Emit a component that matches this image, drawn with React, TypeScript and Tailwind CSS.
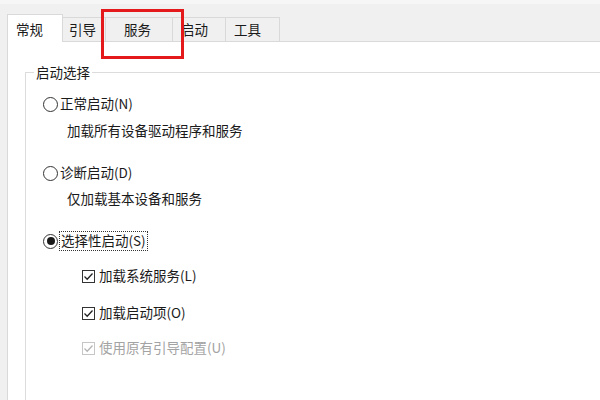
import React from "react";

const font = { fontFamily: '"Noto Sans CJK SC", "Microsoft YaHei", sans-serif' };

function Radio({ checked }: { checked?: boolean }) {
  return (
    <span className="flex h-[15px] w-[15px] shrink-0 items-center justify-center rounded-full border border-[#333] bg-white">
      {checked && <span className="h-[8px] w-[8px] rounded-full bg-[#1a1a1a]" />}
    </span>
  );
}

function Check({ disabled }: { disabled?: boolean }) {
  return (
    <span
      className={
        "flex h-[13px] w-[13px] shrink-0 items-center justify-center border bg-white " +
        (disabled ? "border-[#c6c6c6]" : "border-[#333]")
      }
    >
      <svg width="11" height="11" viewBox="0 0 11 11">
        <polyline
          points="1.5,5.5 4.2,8.2 9.5,2.5"
          fill="none"
          stroke={disabled ? "#b4b4b4" : "#222"}
          strokeWidth="1.3"
        />
      </svg>
    </span>
  );
}

export default function App() {
  return (
    <div className="relative h-[400px] w-[600px] overflow-hidden bg-[#f0f0f0] text-[13.5px] leading-none text-[#1a1a1a]" style={font}>
      <div className="h-[4px] bg-[#f6f6f6]" />
      {/* tab strip */}
      <div className="flex h-[37px] items-end pl-[7px]">
        <div className="relative z-10 -mb-[1px] flex h-[28px] w-[56px] items-center border border-b-0 border-[#d9d9d9] bg-white pl-[8px] pt-[2px]">
          常规
        </div>
        <div className="flex h-[24px] w-[43px] items-center border-t border-r border-[#d9d9d9] pl-[6px]">引导</div>
        <div className="flex h-[24px] w-[67px] items-center border-t border-r border-[#d9d9d9] pl-[18px]">服务</div>
        <div className="flex h-[24px] w-[53px] items-center border-t border-r border-[#d9d9d9] pl-[8px]">启动</div>
        <div className="flex h-[24px] w-[54px] items-center border-t border-r border-[#d9d9d9] pl-[8px]">工具</div>
      </div>
      {/* page */}
      <div className="ml-[7px] h-[400px] border-t border-l border-[#d9d9d9] bg-white pl-[17px] pt-[30px]">
        <div className="relative h-[400px] border-t border-l border-[#dcdcdc]">
          <div className="absolute -top-[10px] left-[8px] bg-white px-[2px] leading-[18px]">启动选择</div>
          <div className="pl-[17px] pt-[21px]">
            <div className="flex h-[20px] items-center gap-[2px]">
              <Radio />
              <span>正常启动(N)</span>
            </div>
            <div className="mt-[7px] flex h-[20px] items-center pl-[24px]">加载所有设备驱动程序和服务</div>
            <div className="mt-[22px] flex h-[20px] items-center gap-[2px]">
              <Radio />
              <span>诊断启动(D)</span>
            </div>
            <div className="mt-[6px] flex h-[20px] items-center pl-[24px]">仅加载基本设备和服务</div>
            <div className="mt-[22px] flex h-[20px] items-center gap-[1px]">
              <Radio checked />
              <span className="border border-dotted border-[#333] px-[1px] py-[2px]">选择性启动(S)</span>
            </div>
            <div className="mt-[15px] flex h-[20px] items-center gap-[4px] pl-[39px]">
              <Check />
              <span>加载系统服务(L)</span>
            </div>
            <div className="mt-[17px] flex h-[20px] items-center gap-[4px] pl-[39px]">
              <Check />
              <span>加载启动项(O)</span>
            </div>
            <div className="mt-[15px] flex h-[20px] items-center gap-[4px] pl-[39px] text-[#a3a3a3]">
              <Check disabled />
              <span>使用原有引导配置(U)</span>
            </div>
          </div>
        </div>
      </div>
      {/* red highlight */}
      <div className="absolute left-[101px] top-[9px] h-[50px] w-[83px] border-[3px] border-[#e3191b]" />
    </div>
  );
}
